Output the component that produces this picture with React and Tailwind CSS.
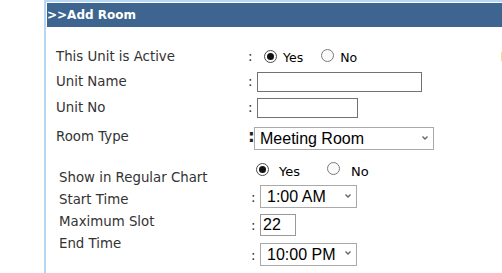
import React from "react";

const Radio = ({ checked }) => (
  <span
    className={
      "flex-none w-[13px] h-[13px] rounded-full border flex items-center justify-center " +
      (checked ? "border-[#4a4a4a] bg-white" : "border-[#7a7a7a] bg-[#fafafa]")
    }
  >
    {checked && <span className="w-[7px] h-[7px] rounded-full bg-[#111]" />}
  </span>
);

const Chevron = () => (
  <svg
    width="8"
    height="6"
    viewBox="0 0 8 6"
    className="absolute right-[5px] top-1/2 -translate-y-1/2 pointer-events-none"
  >
    <path d="M1.5 1.5 L4 4 L6.5 1.5" fill="none" stroke="#666" strokeWidth="1.4" />
  </svg>
);

const Select = ({ value, w, pl }) => (
  <div className={"relative h-[23px] " + w}>
    <select
      defaultValue={value}
      className={
        "appearance-none w-full h-full border border-[#a9a9a9] bg-white text-black text-[16px] leading-[21px] font-['Liberation_Sans',Arial,sans-serif] outline-none " +
        pl
      }
    >
      <option>{value}</option>
    </select>
    <Chevron />
  </div>
);

export default function App() {
  const label = "text-[13.33px] text-[#333] font-['DejaVu_Sans',Verdana,sans-serif]";
  return (
    <div className="relative w-[502px] h-[273px] bg-white overflow-hidden pl-[44px]">
      <div className="h-full border-l-2 border-t-2 border-[#b6d6f4] pl-px pt-px">
        <div className="h-[24px] bg-[#3d6590] text-white font-bold text-[12px] leading-[24px] font-['DejaVu_Sans',Verdana,sans-serif]">
          &gt;&gt;Add Room
        </div>

        {/* top section */}
        <div className="mt-[19px] pl-[9px]">
          <div className="flex items-center h-[22px]">
            <div className={"w-[192px] " + label}>This Unit is Active</div>
            <div className={"w-[16px] " + label}>:</div>
            <div className="flex items-center text-[12.5px] text-black font-['DejaVu_Sans',Verdana,sans-serif]">
              <span className="mb-[2px]"><Radio checked /></span>
              <span className="ml-[6px] mt-[2px]">Yes</span>
              <span className="ml-[18px] mb-[4px]"><Radio /></span>
              <span className="ml-[6px] mt-[2px]">No</span>
            </div>
          </div>
          <div className="flex items-center h-[28px]">
            <div className={"w-[192px] " + label}>Unit Name</div>
            <div className={"w-[9px] " + label}>:</div>
            <input className="w-[165px] h-[20px] border border-[#727272] bg-white outline-none" />
          </div>
          <div className="flex items-center h-[24px]">
            <div className={"w-[192px] " + label}>Unit No</div>
            <div className={"w-[9px] " + label}>:</div>
            <input className="w-[101px] h-[20px] border border-[#727272] bg-white outline-none" />
          </div>
          <div className="flex items-center h-[35px]">
            <div className={"w-[192px] -mt-[2px] " + label}>Room Type</div>
            <div className="w-[6px] text-[17px] font-bold text-[#222] font-['DejaVu_Sans',Verdana,sans-serif] -mt-[2px]">:</div>
            <Select value="Meeting Room" w="w-[180px]" pl="pl-[5px]" />
          </div>
        </div>

        {/* lower section */}
        <div className="flex">
          <div className="pl-[12px] w-[204px] pt-[12px]">
            <div className={"leading-[22px] " + label}>Show in Regular Chart</div>
            <div className={"leading-[22px] " + label}>Start Time</div>
            <div className={"leading-[22px] " + label}>Maximum Slot</div>
            <div className={"leading-[22px] " + label}>End Time</div>
          </div>
          <div className="pt-[6px]">
            <div className="flex items-center h-[16px] text-[13px] text-black font-['DejaVu_Sans',Verdana,sans-serif] pl-[5px]">
              <Radio checked />
              <span className="ml-[10px] mt-[6px]">Yes</span>
              <span className="ml-[27px] -mt-[2px]"><Radio /></span>
              <span className="ml-[11px] mt-[6px]">No</span>
            </div>
            <div className="flex items-baseline mt-[7px]">
              <div className={"w-[9px] " + label}>:</div>
              <Select value="1:00 AM" w="w-[97px]" pl="pl-[6px]" />
            </div>
            <div className="flex items-baseline mt-[6px]">
              <div className={"w-[9px] " + label}>:</div>
              <input
                defaultValue="22"
                className="w-[36px] h-[22px] border border-[#999] bg-white outline-none pl-[2px] text-[16px] text-black font-['Liberation_Sans',Arial,sans-serif]"
              />
            </div>
            <div className="flex items-baseline mt-[6px]">
              <div className={"w-[9px] " + label}>:</div>
              <Select value="10:00 PM" w="w-[97px]" pl="pl-[6px]" />
            </div>
          </div>
        </div>
      </div>
      <div className="absolute left-[501px] top-[52px] w-px h-[9px] bg-[#f5d98c]" />
    </div>
  );
}
